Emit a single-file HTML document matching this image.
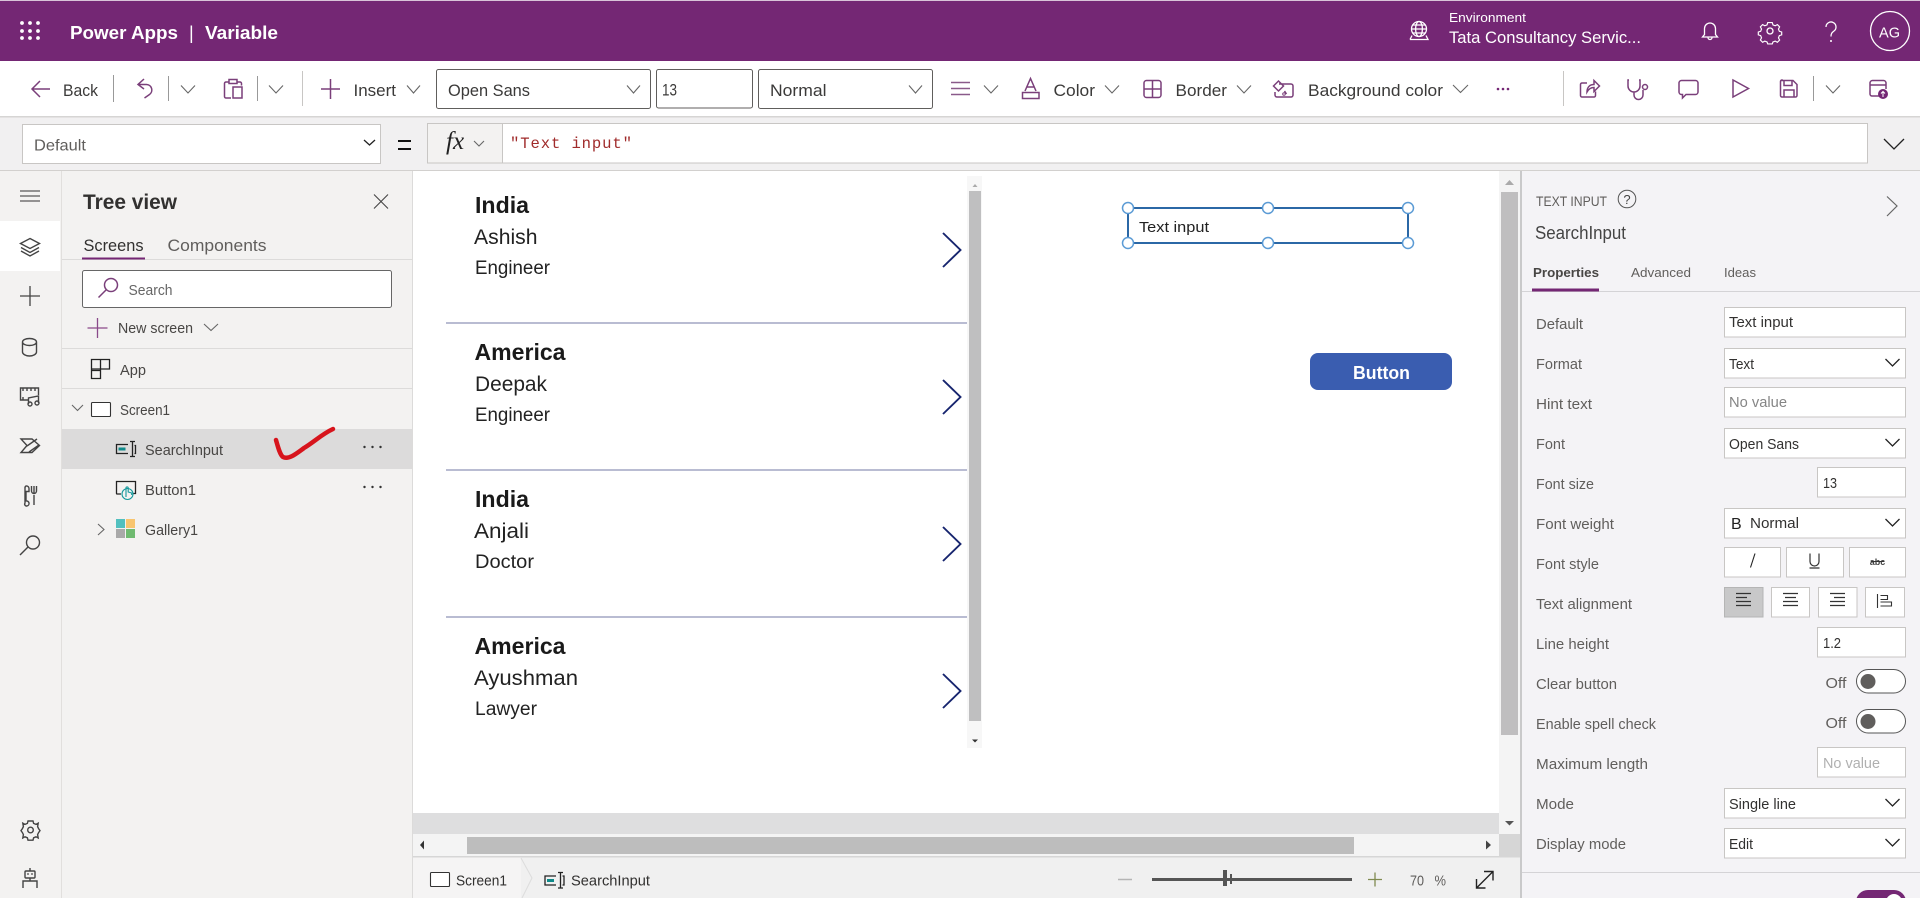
<!DOCTYPE html>
<html lang="en">
<head>
<meta charset="utf-8">
<title>Power Apps | Variable</title>
<style>
html,body{margin:0;padding:0;width:1920px;height:898px;overflow:hidden;background:#fff}
svg{display:block;position:absolute;left:0;top:0}
text{font-family:"Liberation Sans",sans-serif;white-space:pre}
.tb{font-size:16.5px;fill:#3b3a39}
.lb{font-size:15px;fill:#605e5c}
.v{font-size:15px;fill:#323130}
.tr{font-size:15px;fill:#484644}
.h{font-size:23px;font-weight:700;fill:#1a1a1a}
.n{font-size:21px;fill:#222}
.r{font-size:19px;fill:#222}
.p{stroke:#7a3f7a;stroke-width:1.5;fill:none}
.d{stroke:#444;stroke-width:1.4;fill:none}
.c{stroke:#666;stroke-width:1.1;fill:none}
.k{stroke:#222;stroke-width:1.3;fill:none}
.w{stroke:#fff;stroke-width:1.3;fill:none}
.box{fill:#fff;stroke:#c8c6c4;stroke-width:1}
.tool{fill:#fff;stroke:#605e5c;stroke-width:1}
</style>
</head>
<body>
<svg width="1920" height="898" viewBox="0 0 1920 898" xmlns="http://www.w3.org/2000/svg">
<rect width="1920" height="898" fill="#fff"/>
<!-- header -->
<rect y="1" width="1920" height="60" fill="#742774"/>
<rect width="1920" height="1" fill="#d9c3d9"/>
<g fill="#fff">
<circle cx="22" cy="23" r="1.9"/><circle cx="30" cy="23" r="1.9"/><circle cx="38" cy="23" r="1.9"/>
<circle cx="22" cy="31" r="1.9"/><circle cx="30" cy="31" r="1.9"/><circle cx="38" cy="31" r="1.9"/>
<circle cx="22" cy="38" r="1.9"/><circle cx="30" cy="38" r="1.9"/><circle cx="38" cy="38" r="1.9"/>
</g>
<g fill="#fff" font-weight="700" font-size="18">
<text x="70" y="39" textLength="108" lengthAdjust="spacingAndGlyphs">Power Apps</text>
<text x="189" y="39" font-weight="400">|</text>
<text x="205" y="39" textLength="73" lengthAdjust="spacingAndGlyphs">Variable</text>
</g>
<text x="1449" y="22" font-size="12.5" fill="#fff" textLength="77" lengthAdjust="spacingAndGlyphs">Environment</text>
<text x="1449" y="43" font-size="16.5" fill="#fff" textLength="192" lengthAdjust="spacingAndGlyphs">Tata Consultancy Servic...</text>
<g class="w">
<circle cx="1419" cy="29" r="7.5"/><ellipse cx="1419" cy="29" rx="3.4" ry="7.5"/><path d="M1411.5 29h15M1413 25h12M1413 33h12M1410 39.500h18l-2-4M1410 39.500l2-4"/>
<path d="M1710 23a5.500 5.500 0 0 0-5.500 5.500v6l-2 2.500h15l-2-2.500v-6a5.500 5.500 0 0 0-5.500-5.500zM1708 37.500a2 2 0 0 0 4 0"/>
<circle cx="1770" cy="31" r="3"/>
<path d="M1767.500 21.500l5 0 .8 2.600 2.500 1 2.400-1.300 2.500 2.500-1.300 2.400 1 2.500 2.600.8v3.200l-2.600.8-1 2.500 1.300 2.400-2.500 2.500-2.400-1.300-2.500 1-.8 2.200h-5l-.8-2.200-2.500-1-2.400 1.300-2.500-2.500 1.300-2.400-1-2.500-2.600-.8v-3.200l2.600-.8 1-2.500-1.300-2.400 2.500-2.500 2.400 1.300 2.500-1z" transform="translate(177 3.200) scale(.9)"/>
<path d="M1826 27a5 5 0 1 1 8 4c-2 1.500-3 2.500-3 5.500"/>
<circle cx="1890" cy="31" r="19.500"/>
</g>
<circle cx="1831" cy="41" r="1" fill="#fff"/>
<text x="1889.500" y="37.500" font-size="15" fill="#fff" text-anchor="middle" textLength="21" lengthAdjust="spacingAndGlyphs">AG</text>

<!-- toolbar -->
<rect y="116" width="1920" height="1.500" fill="#d6d5d4"/>
<path class="p" d="M50 89H32M40 81l-8 8 8 8"/>
<text class="tb" x="63" y="96" textLength="35" lengthAdjust="spacingAndGlyphs">Back</text>
<path d="M113.500 75v27M168.500 76v25M257.500 76v25M1813.500 76v25" stroke="#999" stroke-width="1"/>
<path d="M302.500 71v35M1563.500 71v35" stroke="#c8c6c4" stroke-width="1"/>
<path class="p" d="M144 79l-6 5.500 6 4.500M138.500 84.500h8a5.500 5.500 0 0 1 3 10l-5 3.500"/>
<path class="c" d="M181 85.500l7 7.500 7-7.500M269 85.500l7 7.500 7-7.500M407 85.500l6.500 7.500 6.500-7.500M984 85.500l7 7.500 7-7.500M1105 85.500l7 7.500 7-7.500M1237 85.500l7 7.500 7-7.500M1453 85l7.500 7.500 7.500-7.500M1826 85.500l7 7.500 7-7.500"/>
<path class="p" d="M229 82h-3a1.500 1.500 0 0 0-1.500 1.500v13a1.500 1.500 0 0 0 1.500 1.500h5M229 79.500h8v4h-8zM237 82h3a1.500 1.500 0 0 1 1.500 1.500v2M233 87h9v11h-9z"/>
<path class="p" d="M330.500 79v20M321 89h19"/>
<text class="tb" x="353.500" y="96" textLength="42.500" lengthAdjust="spacingAndGlyphs">Insert</text>
<rect class="tool" x="436.500" y="69.500" width="214" height="39" rx="2"/>
<text class="tb" x="448" y="96" fill="#323130" textLength="82" lengthAdjust="spacingAndGlyphs">Open Sans</text>
<path class="c" d="M627 85.500l6.500 7.500 6.500-7.500"/>
<rect class="tool" x="656.500" y="69.500" width="96" height="38.500" rx="2"/>
<text class="tb" x="662" y="95.500" textLength="15" lengthAdjust="spacingAndGlyphs">13</text>
<rect class="tool" x="758.500" y="69.500" width="174" height="39" rx="2"/>
<text class="tb" x="770" y="96" textLength="56.500" lengthAdjust="spacingAndGlyphs">Normal</text>
<path class="c" d="M909 85.500l6.500 7.500 6.500-7.500"/>
<path d="M951 82.500h19M951 88.500h19M951 94.500h19" stroke="#8a5a8a" stroke-width="1.500"/>
<path class="p" d="M1025 91l5.500-12.500 5.500 12.500M1027 87h7M1022.500 92.500h16.500v6h-16.500z"/>
<text class="tb" x="1053.500" y="96" textLength="41.500" lengthAdjust="spacingAndGlyphs">Color</text>
<path class="p" d="M1146.500 80.500h12a2.500 2.500 0 0 1 2.500 2.500v12a2.500 2.500 0 0 1-2.500 2.500h-12a2.500 2.500 0 0 1-2.500-2.500v-12a2.500 2.500 0 0 1 2.500-2.500zM1152.500 80.500v17M1144 89h17"/>
<text class="tb" x="1175.500" y="96" textLength="51.500" lengthAdjust="spacingAndGlyphs">Border</text>
<path class="p" d="M1279 84h12a2 2 0 0 1 2 2v9a2 2 0 0 1-2 2h-14a2 2 0 0 1-2-2v-3M1273.500 86l5-5 5 5-5 5zM1284.500 91l2 3"/>
<circle cx="1284" cy="94" r="1.300" fill="none" stroke="#7a3f7a"/>
<text class="tb" x="1308" y="96" textLength="135" lengthAdjust="spacingAndGlyphs">Background color</text>
<g fill="#742774"><circle cx="1498" cy="89" r="1.300"/><circle cx="1503" cy="89" r="1.300"/><circle cx="1508" cy="89" r="1.300"/></g>
<path class="p" d="M1587 83h-5a1.500 1.500 0 0 0-1.500 1.500v11a1.500 1.500 0 0 0 1.500 1.500h12a1.500 1.500 0 0 0 1.500-1.500v-4M1587 92c0-5 3-7.500 7-7.500v-4l5.500 5.500-5.500 5.500v-4c-3 0-5 1-7 4.500z"/>
<path class="p" d="M1629 80h-1v6a6 6 0 0 0 12 0v-6h-1M1634 92v3a4.500 4.500 0 0 0 9 0v-5"/>
<circle class="p" cx="1645" cy="87" r="2.500"/>
<path class="p" d="M1681.500 80.500h14a2.500 2.500 0 0 1 2.500 2.500v9a2.500 2.500 0 0 1-2.500 2.500h-9.500l-3.500 3.500v-3.500h-1a2.500 2.500 0 0 1-2.500-2.500v-9a2.500 2.500 0 0 1 2.500-2.500z"/>
<path class="p" d="M1733 80v17l15.500-8.500z"/>
<path class="p" d="M1782 80.500h11l4 4v11a1.500 1.500 0 0 1-1.500 1.500h-13.500a1.500 1.500 0 0 1-1.500-1.500v-14a1.500 1.500 0 0 1 1.500-1.500zM1784 80.500v5h8v-5M1784 97v-7h10v7"/>
<path class="p" d="M1879 96h-7a2 2 0 0 1-2-2v-11a2.500 2.500 0 0 1 2.500-2.500h11a2.500 2.500 0 0 1 2.500 2.500v6M1870 85h16"/>
<circle cx="1883" cy="94" r="5" fill="#742774"/><path d="M1883 97v-5M1881 93.500l2-2 2 2" stroke="#fff" stroke-width="1" fill="none"/>

<!-- formula bar -->
<rect y="117.500" width="1920" height="52.500" fill="#f1f0f1"/>
<rect class="box" x="22.500" y="124.500" width="358" height="39"/>
<text x="34" y="150.500" font-size="16" fill="#605e5c" textLength="52" lengthAdjust="spacingAndGlyphs">Default</text>
<path class="k" d="M364 140l5.500 5 5.500-5" stroke-width="1"/>
<path d="M398 141h13M398 149h13" stroke="#111" stroke-width="2"/>
<rect x="427.500" y="123.500" width="75" height="39.500" fill="#f3f2f1" stroke="#c8c6c4"/>
<rect x="502.500" y="123.500" width="1365" height="39.500" fill="#fff" stroke="#c8c6c4"/>
<text x="446" y="149" font-style="italic" font-size="25" fill="#222" style="font-family:'Liberation Serif',serif">fx</text>
<path class="c" d="M474 141l5 5 5-5"/>
<text x="510" y="148" font-size="15.600" fill="#a02b2b" style="font-family:'Liberation Mono',monospace" textLength="122">"Text input"</text>
<path class="k" d="M1884 139l10 10 10-10" stroke-width="1.500"/>

<!-- left rail -->
<rect y="170" width="413" height="728" fill="#f3f2f1"/>
<rect y="170" width="1920" height="1" fill="#d2d0ce"/>
<rect x="61" y="171" width="1" height="727" fill="#e1dfdd"/>
<rect y="221" width="60" height="50" fill="#fff"/>
<path d="M20 191h20M20 196h20M20 201h20" stroke="#333" stroke-width="1"/>
<path class="d" d="M30 238.500l9.500 5-9.500 5-9.500-5zM21 247.500l9 5 9-5M21 251l9 5 9-5"/>
<path d="M20 296h20M30 286v20" stroke="#444" stroke-width="1.300"/>
<path class="d" d="M22.500 342v10c0 2 3 4 7 4s7-2 7-4v-10M22.500 342c0-2 3-3.500 7-3.500s7 1.500 7 3.500-3 3.500-7 3.500-7-1.500-7-3.500z"/>
<path class="d" d="M28 400h-7.500v-12h18v7M23 388v3M27 388v3M31 388v3M35 388v3M23 397v3M28.500 404v-6l10-2v7"/>
<circle class="d" cx="30" cy="404" r="2"/><circle class="d" cx="37" cy="403" r="2"/>
<path class="d" d="M21 439h11l7.500 6.500-7.500 7h-11l6-7zM27 446l10-7M29 452l10-7"/>
<path class="d" d="M26 486a2.500 2.500 0 0 1 3 2.500v3h-4v-3a2.500 2.500 0 0 1 1-2.500zM26 491v10a2 2 0 0 1 1 5h-1a2 2 0 0 1-1-3v-12M34 486v7M31.500 486v5a2.500 2.500 0 0 0 5 0v-5M34 495v10"/>
<circle class="d" cx="33" cy="542.500" r="6.500"/><path class="d" d="M28 547l-8 8"/>
<circle class="d" cx="30.500" cy="830" r="2.800"/>
<path class="d" d="M28 821h5l.6 2.400 2.400 1 2.200-1.200-.6 3.400 1 2 1.400 2-1.400 2-1 2 .6 3.400-2.200-1.200-2.400 1-.6 2.400h-5l-.6-2.400-2.400-1-2.200 1.200.6-3.400-1-2-1.400-2 1.400-2 1-2-.6-3.400 2.200 1.200 2.400-1z" stroke-width="1.100"/>
<path class="d" d="M26 871h8a1 1 0 0 1 1 1v5a1 1 0 0 1-1 1h-8a1 1 0 0 1-1-1v-5a1 1 0 0 1 1-1zM30 871v-3M23 888v-7h14v7M30 878v3" stroke-width="1.100"/>
<circle cx="28" cy="874" r=".9" fill="#444"/><circle cx="32" cy="874" r=".9" fill="#444"/>

<!-- tree -->
<rect x="412" y="171" width="1" height="727" fill="#dcdbda"/>
<text x="83" y="209" font-size="21" font-weight="700" fill="#323130" textLength="94" lengthAdjust="spacingAndGlyphs">Tree view</text>
<path d="M374 194.500l14 14M388 194.500l-14 14" stroke="#444" stroke-width="1.100"/>
<text x="83.500" y="251" font-size="16.500" fill="#323130" textLength="60" lengthAdjust="spacingAndGlyphs">Screens</text>
<text x="167.500" y="251" font-size="16.500" fill="#605e5c" textLength="99" lengthAdjust="spacingAndGlyphs">Components</text>
<rect x="62" y="259" width="350" height="1" fill="#dcdbda"/>
<rect x="82" y="257.500" width="63" height="2" fill="#742774"/>
<rect x="82.500" y="270.500" width="309" height="37" rx="2" fill="#fff" stroke="#666"/>
<circle class="p" cx="111" cy="285" r="6.500"/><path class="p" d="M106 290l-7.500 7.500"/>
<text x="128.500" y="295" font-size="15" fill="#666" textLength="44" lengthAdjust="spacingAndGlyphs">Search</text>
<path d="M97.500 318v20M87.500 328h20" stroke="#8a4a8a" stroke-width="1.300"/>
<text class="tr" x="118" y="333" textLength="75" lengthAdjust="spacingAndGlyphs">New screen</text>
<path class="c" d="M204 324l7 6.500 7-6.500"/>
<rect x="62" y="348" width="350" height="1" fill="#dcdbda"/>
<path class="k" d="M91.500 370.500v8h9v-8zM91.500 370.500v-11h9v11M100.500 359.500h9v9.500h-18" stroke-width="1.200"/>
<text class="tr" x="120" y="375" textLength="26" lengthAdjust="spacingAndGlyphs">App</text>
<rect x="62" y="388" width="350" height="1" fill="#dcdbda"/>
<path class="c" d="M72 405l5.500 5.500 5.500-5.500"/>
<rect x="91.500" y="402.500" width="19" height="14" rx="1" fill="#fff" stroke="#333" stroke-width="1.100"/>
<text class="tr" x="120" y="415" textLength="50" lengthAdjust="spacingAndGlyphs">Screen1</text>
<rect x="62" y="429" width="350" height="40" fill="#dcdbdb"/>
<path class="k" d="M128 444.500h-11.500v9h11.500M130 441.500h5M130 456.500h5M132.500 441.500v15M134.500 445.500h1v8h-1" stroke-width="1"/>
<rect x="118.500" y="447.500" width="7" height="3" fill="#0f8a8a"/>
<text class="tr" x="145" y="455" textLength="78" lengthAdjust="spacingAndGlyphs">SearchInput</text>
<path d="M276 440c2 7 4 15 7 17 6 3 14-4 21-9 10-6 18-14 29-19" fill="none" stroke="#d7141c" stroke-width="4.500" stroke-linecap="round"/>
<g fill="#333"><circle cx="364.500" cy="447" r="1.200"/><circle cx="372.500" cy="447" r="1.200"/><circle cx="380.500" cy="447" r="1.200"/>
<circle cx="364.500" cy="487" r="1.200"/><circle cx="372.500" cy="487" r="1.200"/><circle cx="380.500" cy="487" r="1.200"/></g>
<path class="k" d="M121 494h-4a.5.500 0 0 1-.5-.5v-12h19v12h-3" stroke-width="1"/>
<circle cx="127.500" cy="494" r="5.500" fill="none" stroke="#12989b" stroke-width="1.100"/>
<path d="M126 497v-9a1 1 0 0 1 2.200 0v4l3.500 1v2" fill="none" stroke="#12989b" stroke-width="1.100"/>
<text class="tr" x="145" y="495" textLength="51" lengthAdjust="spacingAndGlyphs">Button1</text>
<path class="c" d="M98 524l6 5.500-6 5.500"/>
<rect x="116" y="519" width="9" height="9" fill="#52c0bf"/><rect x="126" y="519" width="9" height="9" fill="#f8c56f"/>
<rect x="116" y="529" width="9" height="9" fill="#a9a9a9"/><rect x="126" y="529" width="9" height="9" fill="#6fba70"/>
<text class="tr" x="145" y="535" textLength="53" lengthAdjust="spacingAndGlyphs">Gallery1</text>

<!-- gallery -->
<text class="h" x="475" y="213" textLength="54" lengthAdjust="spacingAndGlyphs">India</text>
<text class="n" x="474" y="244" textLength="63.500" lengthAdjust="spacingAndGlyphs">Ashish</text>
<text class="r" x="475" y="274" textLength="75" lengthAdjust="spacingAndGlyphs">Engineer</text>
<text class="h" x="474.500" y="360" textLength="91" lengthAdjust="spacingAndGlyphs">America</text>
<text class="n" x="475" y="391" textLength="72" lengthAdjust="spacingAndGlyphs">Deepak</text>
<text class="r" x="475" y="421" textLength="75" lengthAdjust="spacingAndGlyphs">Engineer</text>
<text class="h" x="475" y="507" textLength="54" lengthAdjust="spacingAndGlyphs">India</text>
<text class="n" x="474" y="538" textLength="55" lengthAdjust="spacingAndGlyphs">Anjali</text>
<text class="r" x="475" y="568" textLength="59" lengthAdjust="spacingAndGlyphs">Doctor</text>
<text class="h" x="474.500" y="654" textLength="91" lengthAdjust="spacingAndGlyphs">America</text>
<text class="n" x="474" y="685" textLength="104" lengthAdjust="spacingAndGlyphs">Ayushman</text>
<text class="r" x="475" y="715" textLength="62" lengthAdjust="spacingAndGlyphs">Lawyer</text>
<path d="M446 323h521M446 470h521M446 617h521" stroke="#8f94b8" stroke-width="1.300"/>
<path d="M943 233l17.500 17-17.500 17M943 380l17.500 17-17.500 17M943 527l17.500 17-17.500 17M943 674l17.500 17-17.500 17" fill="none" stroke="#16246e" stroke-width="1.900"/>
<rect x="967" y="176" width="15" height="572" fill="#f7f7f7"/>
<rect x="969" y="191" width="12" height="530" fill="#bfbfc0"/>
<path d="M972.500 187l2.500-3 2.500 3z" fill="#aaa"/>
<path d="M972 739.500h6l-3 3z" fill="#333"/>

<!-- text input & button -->
<rect x="1128" y="208" width="280" height="35" fill="#fff" stroke="#2b68a6" stroke-width="2"/>
<text x="1139" y="232" font-size="15" fill="#222" textLength="70" lengthAdjust="spacingAndGlyphs">Text input</text>
<g fill="#fff" stroke="#5b9bd5" stroke-width="1.500">
<circle cx="1128" cy="208" r="5.500"/><circle cx="1268" cy="208" r="5.500"/><circle cx="1408" cy="208" r="5.500"/>
<circle cx="1128" cy="243" r="5.500"/><circle cx="1268" cy="243" r="5.500"/><circle cx="1408" cy="243" r="5.500"/>
</g>
<rect x="1310" y="353" width="142" height="37" rx="8" fill="#3a5db0"/>
<text x="1353" y="379" font-size="18" font-weight="700" fill="#fff" textLength="57" lengthAdjust="spacingAndGlyphs">Button</text>

<!-- canvas scrollbars -->
<rect x="1499" y="171" width="21" height="663" fill="#f4f4f4"/>
<rect x="1501" y="192" width="17" height="543" fill="#bfbebf"/>
<path d="M1505 185l4.500-5 4.500 5z" fill="#aaa"/>
<path d="M1505 821h9l-4.500 4.500z" fill="#555"/>
<rect x="413" y="813" width="1086" height="21" fill="#dededf"/>
<rect x="413" y="834" width="1086" height="22" fill="#f4f4f4"/>
<rect x="467" y="837" width="887" height="17" fill="#bdbdbd"/>
<path d="M424 840.500v9l-4-4.500z" fill="#333"/>
<path d="M1486 840.500v9l5-4.500z" fill="#444"/>
<rect x="1499" y="834" width="21" height="22" fill="#d6d6d6"/>
<rect x="413" y="856" width="1107" height="1.500" fill="#d6d6d6"/>
<rect x="413" y="857.500" width="1107" height="40.500" fill="#f0f0f0"/>
<rect x="413" y="857.500" width="108" height="40.500" fill="#f5f4f4"/>
<path d="M521 858l11 20-10 20" fill="none" stroke="#dcdcdc"/>
<rect x="430.500" y="872.500" width="19" height="14" rx="1" fill="#fff" stroke="#333" stroke-width="1.100"/>
<text x="456" y="885.500" font-size="15" fill="#323130" textLength="51" lengthAdjust="spacingAndGlyphs">Screen1</text>
<path class="k" d="M556 876h-11v9h11M558 872.500h5M558 888h5M560.500 872.500v15.500M562.500 876h1.500v9h-1.500" stroke-width="1"/>
<rect x="547" y="879" width="7" height="3" fill="#0f8a8a"/>
<text x="571" y="885.500" font-size="15" fill="#323130" textLength="79" lengthAdjust="spacingAndGlyphs">SearchInput</text>
<path d="M1118 879.500h14" stroke="#b5b5b5" stroke-width="1.500"/>
<path d="M1152 879.500h200" stroke="#555" stroke-width="3"/>
<rect x="1223" y="870" width="4" height="16" fill="#555"/>
<rect x="1230" y="874" width="2" height="10" fill="#555"/>
<path d="M1368 879.500h14M1375 872.500v14" stroke="#808a50" stroke-width="1.300"/>
<text x="1410" y="885.500" font-size="15" fill="#605e5c" textLength="14" lengthAdjust="spacingAndGlyphs">70</text>
<text x="1434.500" y="885.500" font-size="15" fill="#605e5c" textLength="11.500" lengthAdjust="spacingAndGlyphs">%</text>
<path d="M1477 887.500l15.500-15.500M1484 871.500h9v9M1476.500 879v9h9" fill="none" stroke="#222" stroke-width="1.400"/>

<!-- right panel -->
<rect x="1520" y="171" width="2" height="727" fill="#c9c9ca"/>
<rect x="1522" y="171" width="398" height="727" fill="#f4f3f6"/>
<text x="1536" y="206" font-size="14" fill="#605e5c" textLength="71" lengthAdjust="spacingAndGlyphs">TEXT INPUT</text>
<circle cx="1627" cy="199" r="8.800" fill="none" stroke="#555" stroke-width="1"/>
<text x="1627" y="204" font-size="13" fill="#444" text-anchor="middle">?</text>
<text x="1535" y="239" font-size="18" fill="#444" textLength="91" lengthAdjust="spacingAndGlyphs">SearchInput</text>
<path d="M1887 196.500l10 9.500-10 10" fill="none" stroke="#666" stroke-width="1.200"/>
<text x="1533" y="277" font-size="13" font-weight="700" fill="#484644" textLength="66" lengthAdjust="spacingAndGlyphs">Properties</text>
<text x="1631" y="277" font-size="13" fill="#605e5c" textLength="60" lengthAdjust="spacingAndGlyphs">Advanced</text>
<text x="1724" y="277" font-size="13" fill="#605e5c" textLength="32" lengthAdjust="spacingAndGlyphs">Ideas</text>
<rect x="1522" y="291" width="398" height="1" fill="#d4d3d6"/>
<rect x="1532" y="288.500" width="67" height="3" fill="#742774"/>

<text class="lb" x="1536" y="329" textLength="47" lengthAdjust="spacingAndGlyphs">Default</text>
<text class="lb" x="1536" y="369" textLength="46" lengthAdjust="spacingAndGlyphs">Format</text>
<text class="lb" x="1536" y="409" textLength="56" lengthAdjust="spacingAndGlyphs">Hint text</text>
<text class="lb" x="1536" y="449" textLength="29" lengthAdjust="spacingAndGlyphs">Font</text>
<text class="lb" x="1536" y="489" textLength="58" lengthAdjust="spacingAndGlyphs">Font size</text>
<text class="lb" x="1536" y="529" textLength="78" lengthAdjust="spacingAndGlyphs">Font weight</text>
<text class="lb" x="1536" y="569" textLength="63" lengthAdjust="spacingAndGlyphs">Font style</text>
<text class="lb" x="1536" y="609" textLength="96" lengthAdjust="spacingAndGlyphs">Text alignment</text>
<text class="lb" x="1536" y="649" textLength="73" lengthAdjust="spacingAndGlyphs">Line height</text>
<text class="lb" x="1536" y="689" textLength="81" lengthAdjust="spacingAndGlyphs">Clear button</text>
<text class="lb" x="1536" y="729" textLength="120" lengthAdjust="spacingAndGlyphs">Enable spell check</text>
<text class="lb" x="1536" y="769" textLength="112" lengthAdjust="spacingAndGlyphs">Maximum length</text>
<text class="lb" x="1536" y="809" textLength="38" lengthAdjust="spacingAndGlyphs">Mode</text>
<text class="lb" x="1536" y="849" textLength="90" lengthAdjust="spacingAndGlyphs">Display mode</text>

<rect class="box" x="1724.500" y="307.500" width="181" height="29.500"/>
<text class="v" x="1729" y="327" textLength="64" lengthAdjust="spacingAndGlyphs">Text input</text>
<rect class="box" x="1724.500" y="348.500" width="181" height="29.500"/>
<text class="v" x="1729" y="369" textLength="25" lengthAdjust="spacingAndGlyphs">Text</text>
<rect class="box" x="1724.500" y="387.500" width="181" height="29.500"/>
<text class="v" x="1729" y="407" style="fill:#858585" textLength="58" lengthAdjust="spacingAndGlyphs">No value</text>
<rect class="box" x="1724.500" y="428.500" width="181" height="29.500"/>
<text class="v" x="1729" y="449" textLength="70" lengthAdjust="spacingAndGlyphs">Open Sans</text>
<rect class="box" x="1817.500" y="467.500" width="88" height="29.500"/>
<text class="v" x="1823" y="488" textLength="14" lengthAdjust="spacingAndGlyphs">13</text>
<rect class="box" x="1724.500" y="508.500" width="181" height="29.500"/>
<text x="1731" y="529" font-size="16" fill="#222">B</text>
<text class="v" x="1750" y="528" textLength="49" lengthAdjust="spacingAndGlyphs">Normal</text>
<path class="k" d="M1885.500 359l7 7 7-7M1885.500 439l7 7 7-7M1885.500 519l7 7 7-7"/>

<rect class="box" x="1724.500" y="547.500" width="56" height="29.500"/>
<rect class="box" x="1786.500" y="547.500" width="57" height="29.500"/>
<rect class="box" x="1849.500" y="547.500" width="56" height="29.500"/>
<path d="M1755 553.500l-4.500 14" stroke="#222" stroke-width="1.100"/>
<path d="M1810 553.500v8a4.500 4.500 0 0 0 9 0v-8M1809.500 568h10" stroke="#333" stroke-width="1.200" fill="none"/>
<text x="1877.500" y="565" font-size="9" font-weight="700" fill="#444" text-anchor="middle">abc</text>
<path d="M1871 561.500h13" stroke="#333" stroke-width="1"/>

<rect x="1724.500" y="587.500" width="38.500" height="29.500" fill="#c8c8c9" stroke="#b5b5b5"/>
<rect class="box" x="1771.500" y="587.500" width="38" height="29.500"/>
<rect class="box" x="1818.500" y="587.500" width="38.500" height="29.500"/>
<rect class="box" x="1865.500" y="587.500" width="39" height="29.500"/>
<path d="M1736 593.500h15M1736 597.500h11M1736 601.500h15M1736 605.500h15M1783 593.500h15M1785 597.500h11M1783 601.500h15M1783 605.500h15M1830 593.500h15M1834 597.500h11M1830 601.500h15M1830 605.500h15" stroke="#333" stroke-width="1.200"/>
<path d="M1877.500 594v14M1880.500 595.500h7v4h-7M1880.500 602h11v4h-11" fill="none" stroke="#333" stroke-width="1.100"/>

<rect class="box" x="1817.500" y="627.500" width="88" height="29.500"/>
<text class="v" x="1823" y="648" textLength="18" lengthAdjust="spacingAndGlyphs">1.2</text>

<text class="v" x="1825.500" y="688" style="fill:#605e5c" textLength="21" lengthAdjust="spacingAndGlyphs">Off</text>
<rect x="1856.500" y="669.500" width="49" height="23.500" rx="11.750" fill="#fff" stroke="#555"/>
<circle cx="1868" cy="681.500" r="7.500" fill="#605e5c"/>
<text class="v" x="1825.500" y="728" style="fill:#605e5c" textLength="21" lengthAdjust="spacingAndGlyphs">Off</text>
<rect x="1856.500" y="709.500" width="49" height="23.500" rx="11.750" fill="#fff" stroke="#555"/>
<circle cx="1868" cy="721.500" r="7.500" fill="#605e5c"/>

<rect class="box" x="1817.500" y="747.500" width="88" height="29.500"/>
<text class="v" x="1823" y="768" style="fill:#b0b0b0" textLength="57" lengthAdjust="spacingAndGlyphs">No value</text>
<rect class="box" x="1724.500" y="788.500" width="181" height="29.500"/>
<text class="v" x="1729" y="809" textLength="67" lengthAdjust="spacingAndGlyphs">Single line</text>
<rect class="box" x="1724.500" y="828.500" width="181" height="29.500"/>
<text class="v" x="1729" y="849" textLength="24" lengthAdjust="spacingAndGlyphs">Edit</text>
<path class="k" d="M1885.500 799l7 7 7-7M1885.500 839l7 7 7-7"/>
<rect x="1522" y="872" width="398" height="1" fill="#d4d3d6"/>
<rect x="1856" y="890" width="50" height="24" rx="12" fill="#742774"/>
<circle cx="1894" cy="902" r="8" fill="#fff"/>
</svg>
</body>
</html>
